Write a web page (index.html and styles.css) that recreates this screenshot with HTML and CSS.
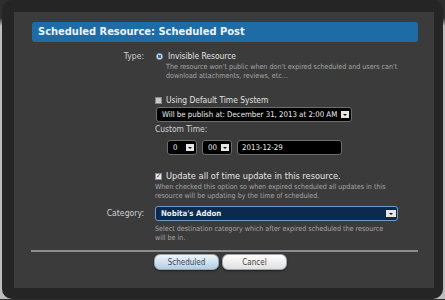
FILE: index.html
```html
<!DOCTYPE html>
<html lang="en">
<head>
    <meta charset="UTF-8">
    <title>Scheduled Resource</title>
    <link rel="stylesheet" href="styles.css">
</head>
<body>
<div class="overlay">
    <div class="panel">
        <h2 class="title">Scheduled Resource: Scheduled Post</h2>

        <div class="row">
            <div class="label">Type:</div>
            <div class="ctrl">
                <div class="option"><span class="radio"></span>Invisible Resource</div>
                <p class="hint indent">The resource won't public when don't expired scheduled and users can't<br>download attachments, reviews, etc...</p>
            </div>
        </div>

        <div class="row gap-lg">
            <div class="label"></div>
            <div class="ctrl">
                <div class="option"><span class="check"></span>Using Default Time System</div>
                <div class="select wide">Will be publish at: December 31, 2013 at 2:00 AM<span class="arrow"></span></div>
                <div class="sub">Custom Time:</div>
                <div class="time">
                    <div class="select hour">0<span class="arrow"></span></div>
                    <div class="select minute">00<span class="arrow"></span></div>
                    <div class="input">2013-12-29</div>
                </div>
            </div>
        </div>

        <div class="row gap-update">
            <div class="label"></div>
            <div class="ctrl">
                <div class="option big"><span class="check on">&#10003;</span>Update all of time update in this resource.</div>
                <p class="hint">When checked this option so when expired scheduled all updates in this<br>resource will be updating by the time of scheduled.</p>
            </div>
        </div>

        <div class="row gap-cat">
            <div class="label cat-label">Category:</div>
            <div class="ctrl">
                <div class="select category">Nobita's Addon<span class="arrow"></span></div>
                <p class="hint cat-hint">Select destination category which after expired scheduled the resource<br>will be in.</p>
            </div>
        </div>

        <div class="divider"></div>

        <div class="buttons">
            <span class="button primary">Scheduled</span>
            <span class="button">Cancel</span>
        </div>
    </div>
</div>
</body>
</html>
```

FILE: styles.css
```css
* {
    margin: 0;
    padding: 0;
    box-sizing: border-box;
}
body {
    background: linear-gradient(#2e2e2e 0, #2e2e2e 18px, #bdbdbd 26px);
    font-family: "DejaVu Sans Condensed", "DejaVu Sans", sans-serif;
    font-size: 8.5px;
    color: #d8d8d8;
    overflow: hidden;
}
.overlay {
    margin: 0 2px 0 2px;
    padding: 12px 9px 11px 12px;
    background: #252525;
    border-radius: 10px;
}
.panel {
    background: #3b3b3b;
    padding: 10px 0 18px 0;
}
.title {
    margin: 0 16px 0 18px;
    height: 20px;
    line-height: 20px;
    padding-left: 6px;
    background: #1e6ca6;
    border-radius: 3px;
    color: #eef4fa;
    font-size: 11px;
    font-weight: bold;
}
.row {
    display: flex;
    margin-top: 8px;
}
.label {
    width: 141px;
    padding-right: 11px;
    flex-shrink: 0;
    text-align: right;
    line-height: 12px;
    font-size: 8.6px;
    color: #cfcfcf;
}
.ctrl {
    flex: 1;
}
.option {
    display: flex;
    align-items: center;
    line-height: 12px;
    font-size: 8.4px;
    color: #e2e2e2;
}
.big {
    font-size: 9.2px;
    color: #e6e6e6;
}
.radio {
    width: 7px;
    height: 7px;
    margin: 0 5px 0 1px;
    border-radius: 50%;
    border: 1px solid #9ab;
    background: radial-gradient(circle, #2a6fa8 0 1.5px, #d8e4ee 2px);
}
.check {
    width: 7px;
    height: 7px;
    margin-right: 4px;
    background: #c8c8c8;
    border: 1px solid #888;
    font-size: 7px;
    line-height: 5px;
    color: #2a4a8a;
    text-align: center;
    overflow: hidden;
}
.check.on {
    background: #e8e8e8;
}
.hint {
    line-height: 9px;
    font-size: 7.1px;
    color: #a6a6a6;
    white-space: nowrap;
}
.indent {
    padding-left: 11px;
}
.gap-lg {
    margin-top: 14px;
}
.select {
    position: relative;
    height: 15px;
    line-height: 13px;
    background: #000;
    border: 1px solid #6e6e6e;
    border-radius: 3px;
    color: #f0f0f0;
    font-size: 7.8px;
    padding-left: 5px;
    white-space: nowrap;
}
.arrow {
    position: absolute;
    right: 2px;
    top: 3px;
    width: 8px;
    height: 7px;
    background: #e6e6e6;
}
.arrow::after {
    content: "";
    position: absolute;
    left: 2px;
    top: 3px;
    border-left: 2px solid transparent;
    border-right: 2px solid transparent;
    border-top: 2px solid #111;
}
.wide {
    width: 196px;
    margin: 1px 0 0 1px;
}
.sub {
    margin-top: 1px;
    line-height: 12px;
    font-size: 8.4px;
    color: #d4d4d4;
}
.time {
    display: flex;
    gap: 5px;
    margin: 5px 0 0 12px;
}
.hour,
.minute {
    width: 30px;
}
.input {
    width: 105px;
    height: 15px;
    line-height: 13px;
    background: #000;
    border: 1px solid #6e6e6e;
    border-radius: 3px;
    padding-left: 4px;
    color: #f0f0f0;
    font-size: 7.8px;
}
.gap-update {
    margin-top: 15px;
}
.gap-cat {
    margin-top: 6px;
}
.cat-label {
    line-height: 15px;
}
.category {
    width: 243px;
    background: #0c2a4b;
    border-color: #6f9cc6;
    font-weight: bold;
    color: #e8eef5;
}
.category .arrow {
    right: 1px;
    width: 10px;
}
.category .arrow::after {
    left: 3px;
}
.cat-hint {
    margin-top: 3px;
}
.divider {
    height: 2px;
    margin: 8px 16px 0 17px;
    background: #8c8c8c;
}
.buttons {
    display: flex;
    gap: 3px;
    margin: 2px 0 0 140px;
}
.button {
    width: 65px;
    height: 16px;
    line-height: 15px;
    text-align: center;
    border-radius: 6px;
    border: 1px solid #9aa6b0;
    background: linear-gradient(#ffffff, #e0e0e0);
    color: #3c3c3c;
    font-size: 8px;
    box-shadow: 0 1px 2px rgba(0, 0, 0, 0.5);
}
.button.primary {
    background: linear-gradient(#eef5fb, #b4cde2);
    color: #34465a;
}
```
